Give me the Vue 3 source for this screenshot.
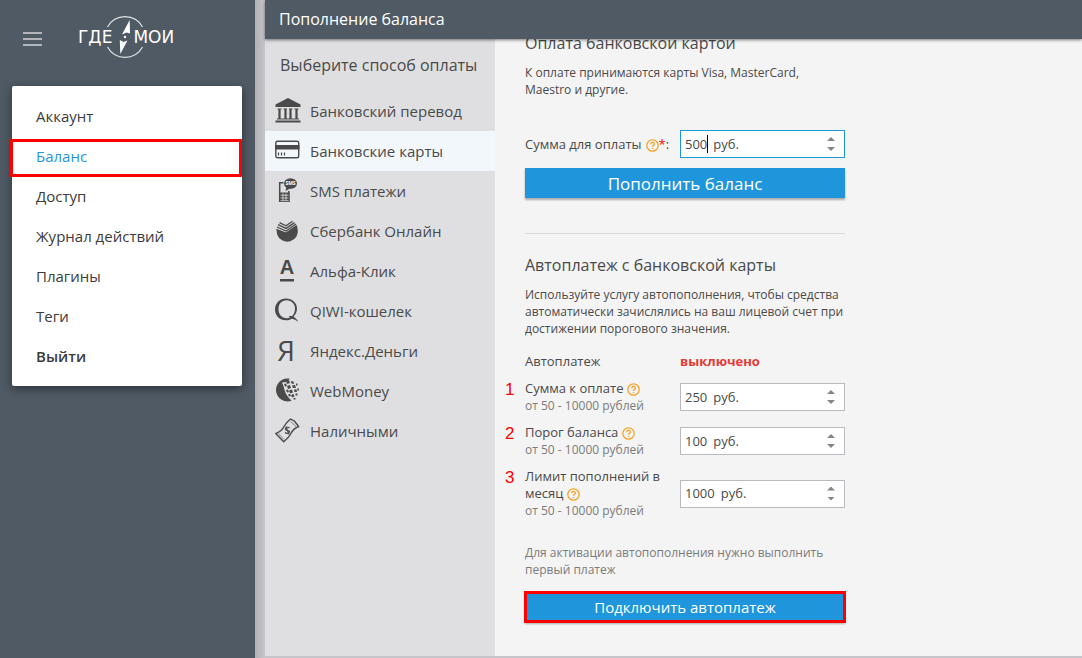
<script setup>
import { ref } from 'vue'

const menu = ref([
  { title: 'Аккаунт' },
  { title: 'Баланс', active: true },
  { title: 'Доступ' },
  { title: 'Журнал действий' },
  { title: 'Плагины' },
  { title: 'Теги' },
  { title: 'Выйти', strong: true },
])

const methods = ref([
  { id: 'bank', title: 'Банковский перевод' },
  { id: 'card', title: 'Банковские карты', active: true },
  { id: 'sms', title: 'SMS платежи' },
  { id: 'sber', title: 'Сбербанк Онлайн' },
  { id: 'alfa', title: 'Альфа-Клик' },
  { id: 'qiwi', title: 'QIWI-кошелек' },
  { id: 'yandex', title: 'Яндекс.Деньги' },
  { id: 'webmoney', title: 'WebMoney' },
  { id: 'cash', title: 'Наличными' },
])

const amount = ref('500')

const limits = ref([
  { id: 'sum', number: 1, title: 'Сумма к оплате', value: '250' },
  { id: 'threshold', number: 2, title: 'Порог баланса', value: '100' },
  { id: 'limit', number: 3, title: 'Лимит пополнений в месяц', value: '1000' },
])

const widthOf = (value) => ({ width: `${Math.max(String(value).length, 1)}ch` })
const step = (value, delta) => String(Math.max(0, (Number(value) || 0) + delta))
</script>

<template>
  <div class="app">
    <aside class="sidebar">
      <div class="brand">
        <button class="burger" type="button" aria-label="Меню">
          <span></span><span></span><span></span>
        </button>
        <a class="logo" href="#" aria-label="ГдеМои">
          <span>ГДЕ</span>
          <svg class="compass" viewBox="0 0 42 42" aria-hidden="true">
            <path d="M3.500 11A20 20 0 0 1 38.500 11M3.500 31A20 20 0 0 0 38.500 31" fill="none" stroke="#dfe2e5" stroke-width="1.200" />
            <path d="M25.700 4L26 17.500L22.500 16.500L18 18.500ZM16.300 38L15.800 24L19.500 26L23.500 24.500Z" fill="#fff" />
            <circle cx="21" cy="21" r="1.200" fill="#fff" />
          </svg>
          <span>МОИ</span>
        </a>
      </div>
      <nav class="menu">
        <a
          v-for="item in menu"
          :key="item.title"
          href="#"
          :class="{ active: item.active, strong: item.strong }"
        >{{ item.title }}</a>
      </nav>
    </aside>

    <main class="page">
      <header class="topbar"><h1>Пополнение баланса</h1></header>
      <div class="body">
        <section class="methods">
          <h2>Выберите способ оплаты</h2>
          <a
            v-for="method in methods"
            :key="method.id"
            href="#"
            class="method"
            :class="{ active: method.active }"
          >
            <svg class="icon" viewBox="0 0 26 26" aria-hidden="true">
              <g v-if="method.id === 'bank'">
                <path d="M13 0L25.500 6.500V9H.5V6.500ZM.5 22.500H25.500V24.500H.5ZM2 20.500H24V21.500H2Z" />
                <path d="M2.500 11H6.500M8.500 11H12M14 11H17.500M19.500 11H23.500" stroke="#4a4a4a" stroke-width="1.200" />
                <path d="M4.500 11V21M10.500 11V21M15.500 11V21M21.500 11V21" stroke="#4a4a4a" stroke-width="2.200" />
              </g>
              <g v-else-if="method.id === 'card'">
                <rect x=".8" y="3.300" width="22.900" height="16.400" rx="1.800" fill="none" stroke="#4a4a4a" stroke-width="1.400" />
                <path d="M0 7H24.500V11.500H0Z" />
                <path d="M3.500 14.500V17.500M6.500 14.500V17.500M9.500 14.500V17.500" stroke="#4a4a4a" stroke-width="1.200" />
              </g>
              <g v-else-if="method.id === 'sms'">
                <path d="M8.500 4.700H4.700V23.300H13.800V13" fill="none" stroke="#4a4a4a" stroke-width="1.500" />
                <path d="M4 14.500H14.500V24H4Z" />
                <path d="M5.500 17.200H13.500M5.500 20H13.500M8 15.500V22.500M11 15.500V22.500M5.500 22.700H13.500" stroke="#dfdfe1" stroke-width=".8" />
                <ellipse cx="15.500" cy="5.500" rx="6.500" ry="5.300" />
                <path d="M11.500 8.500L10.500 13L16 10Z" />
                <text x="15.500" y="7.300" text-anchor="middle" class="sms-text">SMS</text>
              </g>
              <g v-else-if="method.id === 'sber'">
                <path d="M1.500 11L2 16A10.500 10.500 0 0 0 22.500 10L21.500 7L11 14.500Z" />
                <path d="M1.500 11.500L11 15.500L22 8M2 9L11 13L21 6M3 6.700L11 10.400L19.500 4.600M4.500 4.700L11 7.800L17.500 3.300" fill="none" stroke="#4a4a4a" stroke-width="1.300" />
              </g>
              <g v-else-if="method.id === 'alfa'">
                <text x="12" y="16" text-anchor="middle" class="alfa-text">А</text>
                <rect x="5" y="21" width="14" height="2.500" />
              </g>
              <g v-else-if="method.id === 'qiwi'">
                <path fill-rule="evenodd" d="M11 .5C17.500 .5 22 5 22 10.500C22 14 20.500 16.500 18.500 18.500C20.500 20 22.500 21.500 23 24C21 22 18 20.800 16.500 20.800C15 21.800 13 22.300 11 22.300C4.500 22.300 0 17.500 0 11.500C0 5 5 .5 11 .5ZM11.800 2.300C6.500 2.300 3.500 6 3.500 11.300C3.500 16.500 7 20.300 11.800 20.300C13 20.300 14 20 15 19.500L13.500 18.500C15 18 16.500 18 17.200 18C19 16 20 13.500 20 10.500C20 6 16.500 2.300 11.800 2.300Z" />
              </g>
              <g v-else-if="method.id === 'yandex'">
                <text x="11" y="22.500" text-anchor="middle" class="yandex-text">Я</text>
              </g>
              <g v-else-if="method.id === 'webmoney'">
                <path d="M15 .7A11.500 11.500 0 1 0 16.500 22.700L13.500 19.500L11 16L9.500 12L8.500 8L7 4.500L11 4Z" />
                <path d="M11 3L14 2L15 5L12 6ZM16 3L18.500 3.500L19 6L16.500 5.500ZM12 8L15 7L16 10L13 11ZM17 7.500L20 7L21 10L18 10ZM9 6L11 5.500L12 8L10 8.500ZM14 12.500L17 11.500L18 14.500L15 15.500ZM19 11.500L21.500 11.500L22 14L19.500 14ZM16 17L18.500 16L19.500 18.500L17 19.500ZM11 12L13 11.500L14 14L12 14.500ZM13 16.500L15 16L16 18L14 18.500ZM21 5.500H22.500V7.500H21ZM22.300 10.500H24V12.500H22.300ZM20.500 15.500H22.500V17.500H20.500ZM18.500 20H20.500V21.500H18.500Z" />
              </g>
              <g v-else>
                <path d="M.8 15.500C4 14 7 13 9 8.500C11 5 13 3 15.500 1L19.500 3.200L23.700 8.500C18 10.500 17 13.500 15 17C13 20.500 11 21.500 8.700 23.700Z" fill="none" stroke="#4a4a4a" stroke-width="1.400" stroke-linejoin="round" />
                <path d="M15.500 3.500L21 8.500M3.500 15.500L9 21.500" fill="none" stroke="#4a4a4a" stroke-width=".6" />
                <path d="M14.500 10C13 8.500 10 9.500 10.500 11.500C11.500 13.500 14 11.500 14.500 13.500C14.500 15.500 11.500 16 10 14.500M11 8.500L14 16.500" fill="none" stroke="#4a4a4a" stroke-width="1.200" />
              </g>
            </svg>
            <span>{{ method.title }}</span>
          </a>
        </section>

        <section class="content">
          <form class="form" @submit.prevent>
            <h2>Оплата банковской картой</h2>
            <p>К оплате принимаются карты Visa, MasterCard, Maestro и другие.</p>

            <div class="row pay">
              <div class="label">
                <label for="amount">Сумма для оплаты</label>
                <svg class="help" viewBox="0 0 13 13" aria-hidden="true">
                  <circle cx="6.500" cy="6.500" r="5.700" />
                  <path d="M4.700 5.200C4.700 2.900 8.300 2.900 8.300 5.100C8.300 6.500 6.500 6.300 6.500 7.800M6.500 8.900V10" />
                </svg><span class="required">*</span>:
              </div>
              <div class="field focused">
                <input id="amount" v-model="amount" type="text" inputmode="numeric" :style="widthOf(amount)" />
                <i class="caret"></i>
                <span class="unit">руб.</span>
                <span class="spinner">
                  <button type="button" aria-label="Увеличить" @click="amount = step(amount, 1)"></button>
                  <button type="button" aria-label="Уменьшить" @click="amount = step(amount, -1)"></button>
                </span>
              </div>
            </div>
            <button class="submit large" type="submit">Пополнить баланс</button>

            <hr />

            <h2>Автоплатеж с банковской карты</h2>
            <p>Используйте услугу автопополнения, чтобы средства автоматически зачислялись на ваш лицевой счет при достижении порогового значения.</p>

            <div class="row status">
              <span class="label">Автоплатеж</span>
              <strong>выключено</strong>
            </div>

            <div v-for="limit in limits" :key="limit.id" class="row">
              <span class="number">{{ limit.number }}</span>
              <div class="label">
                <label :for="limit.id">{{ limit.title }}</label>
                <svg class="help" viewBox="0 0 13 13" aria-hidden="true">
                  <circle cx="6.500" cy="6.500" r="5.700" />
                  <path d="M4.700 5.200C4.700 2.900 8.300 2.900 8.300 5.100C8.300 6.500 6.500 6.300 6.500 7.800M6.500 8.900V10" />
                </svg>
                <small>от 50 - 10000 рублей</small>
              </div>
              <div class="field">
                <input :id="limit.id" v-model="limit.value" type="text" inputmode="numeric" :style="widthOf(limit.value)" />
                <span class="unit">руб.</span>
                <span class="spinner">
                  <button type="button" aria-label="Увеличить" @click="limit.value = step(limit.value, 1)"></button>
                  <button type="button" aria-label="Уменьшить" @click="limit.value = step(limit.value, -1)"></button>
                </span>
              </div>
            </div>

            <p class="note">Для активации автопополнения нужно выполнить первый платеж</p>
            <button class="submit marked" type="button">Подключить автоплатеж</button>
          </form>
        </section>
      </div>
    </main>
  </div>
</template>

<style>
body {
  margin: 0;
  background: #c9c8cd;
}
</style>

<style scoped>
* {
  box-sizing: border-box;
}
.app {
  display: grid;
  grid-template-columns: 255px 1fr;
  column-gap: 10px;
  min-height: 100vh;
  background: linear-gradient(90deg, #b1b0b5 255px, #c6c5ca 265px);
  color: #4a4a4a;
  font: 13px/17px "Open Sans", "Noto Sans", sans-serif;
}
a {
  color: inherit;
  text-decoration: none;
}
h1,
h2,
p {
  margin: 0;
  font-weight: 400;
}
button,
input {
  padding: 0;
  border: 0;
  background: none;
  color: inherit;
  font: inherit;
}

.sidebar {
  padding: 16px 13px 16px 12px;
  background: #505a64;
}
.brand {
  display: flex;
  align-items: center;
  gap: 36px;
  height: 42px;
  margin-bottom: 28px;
  padding-left: 11px;
}
.burger {
  display: grid;
  gap: 4px;
  width: 19px;
  padding-top: 4px;
}
.burger span {
  height: 2px;
  background: #b1b4ba;
}
.logo {
  display: flex;
  align-items: center;
  color: #fff;
  font: 17px/20px "DejaVu Sans", sans-serif;
}
.compass {
  width: 42px;
  height: 42px;
  margin: 0 -13px 0 -8px;
}
.menu {
  padding: 10px 0;
  border-radius: 2px;
  background: #fff;
  box-shadow: 0 3px 10px rgba(0, 0, 0, 0.45);
}
.menu a {
  position: relative;
  display: block;
  padding-left: 24px;
  color: #3c3c3c;
  font-size: 15px;
  line-height: 40px;
}
.menu .active {
  color: #1f95dc;
}
.menu .active::after {
  content: "";
  position: absolute;
  inset: 3px 0 -1px -2px;
  border: 3px solid #f00;
  border-radius: 1px;
}
.menu .strong {
  font-weight: 600;
}

.page {
  display: flex;
  flex-direction: column;
  min-width: 0;
  margin-bottom: 2px;
}
.topbar {
  position: relative;
  z-index: 1;
  padding: 0 14px;
  background: #505a64;
  box-shadow: 0 1px 3px rgba(0, 0, 0, 0.5);
}
.topbar h1 {
  color: #fff;
  font-size: 16px;
  line-height: 39px;
}
.body {
  display: grid;
  grid-template-columns: 230px 1fr;
  flex: 1;
}
.methods {
  background: #dfdfe1;
}
.methods h2 {
  padding: 6px 0 6px 15px;
  font-size: 16px;
  line-height: 40px;
}
.method {
  display: flex;
  align-items: center;
  gap: 9px;
  height: 40px;
  padding-left: 10px;
  font-size: 15px;
}
.method.active {
  background: #f2f7fb;
}
.icon {
  width: 26px;
  height: 26px;
  overflow: visible;
  fill: #4a4a4a;
}
.sms-text {
  fill: #fff;
  font: 700 5px "Open Sans", sans-serif;
}
.alfa-text {
  font: 700 20px "Liberation Sans", sans-serif;
}
.yandex-text {
  font: 28px "Open Sans", sans-serif;
}

.content {
  padding: 0 30px;
  background: #f4f4f4;
}
.form {
  width: 100%;
  max-width: 320px;
  margin-top: -8px;
}
.form h2 {
  font-size: 16px;
  line-height: 24px;
}
.form p {
  margin-top: 9px;
  font-size: 12px;
}
.row {
  position: relative;
  display: grid;
  grid-template-columns: 1fr 165px;
  align-items: center;
  margin-bottom: 10px;
}
.label {
  padding-right: 16px;
}
.pay {
  margin-top: 32px;
}
.pay .label {
  padding-right: 0;
}
.label small {
  display: block;
  color: #7b7b7b;
  font-size: 12px;
}
.help {
  width: 13px;
  height: 13px;
  margin-left: 4px;
  vertical-align: -3px;
  fill: none;
  stroke: #f5a32a;
  stroke-width: 1.3;
}
.required {
  color: #f00;
}
.status {
  margin-top: 16px;
}
.status strong {
  color: #e53935;
  font-weight: 700;
}
.number {
  position: absolute;
  top: 1px;
  left: -20px;
  color: #f00;
  font: 17px/17px "Liberation Sans", sans-serif;
}
.field {
  display: flex;
  align-items: center;
  height: 28px;
  padding: 0 9px 0 4px;
  border: 1px solid #bbbac1;
  background: #fff;
}
.field.focused {
  border-color: #1f95dc;
}
.field input {
  outline: none;
}
.caret {
  width: 1px;
  height: 18px;
  margin-right: -1px;
  background: #000;
}
.unit {
  margin-left: 6px;
}
.spinner {
  display: grid;
  gap: 6px;
  margin-left: auto;
}
.spinner button {
  width: 8px;
  height: 4px;
  background: #85858c;
  clip-path: polygon(50% 0, 100% 100%, 0 100%);
}
.spinner button:last-child {
  clip-path: polygon(0 0, 100% 0, 50% 100%);
}
.submit {
  display: block;
  width: 100%;
  height: 30px;
  background: #1f95dc;
  box-shadow: 0 2px 2px rgba(0, 0, 0, 0.3);
  color: #fff;
  font-size: 15px;
  font-weight: 500;
}
.submit.large {
  font-size: 17px;
}
.submit.marked {
  outline: 3px solid #f00;
  outline-offset: -2px;
}
hr {
  margin: 35px 0 19px;
  border: 0;
  border-top: 1px solid #d9d9d9;
}
.form .note {
  margin: 25px 0 14px;
  color: #7b7b7b;
}
</style>
